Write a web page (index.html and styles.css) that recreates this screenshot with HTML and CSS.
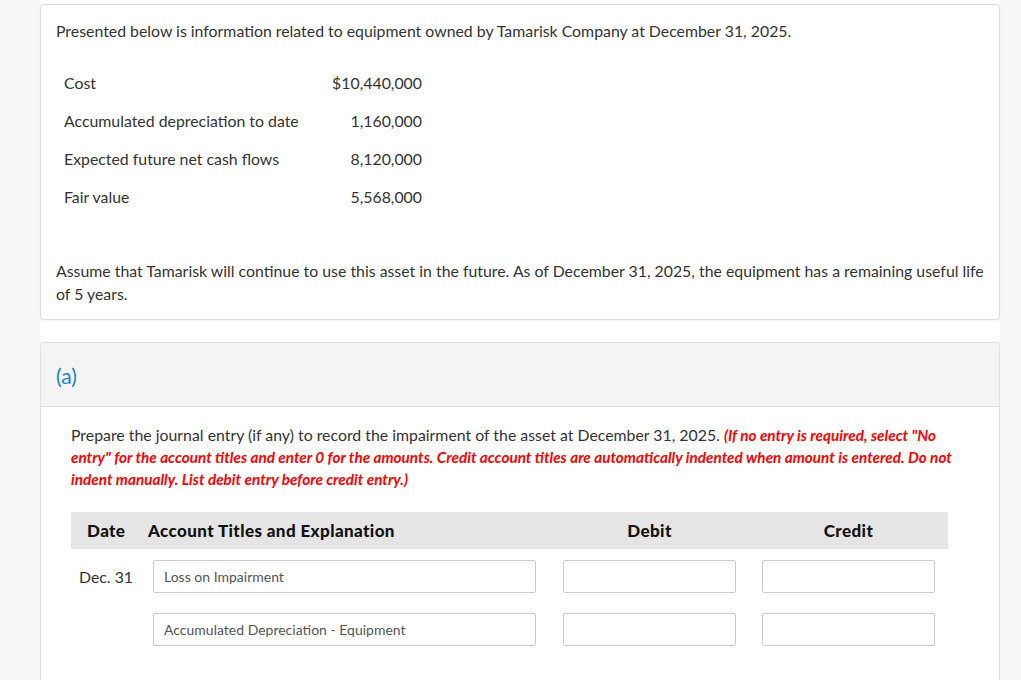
FILE: index.html
```html
<!DOCTYPE html>
<html lang="en">
<head>
<meta charset="utf-8">
<title>Impairment</title>
<link rel="stylesheet" href="styles.css">
</head>
<body>
<div class="page">
  <section class="card info">
    <p class="intro">Presented below is information related to equipment owned by Tamarisk Company at December 31, 2025.</p>
    <table class="data">
      <tr><td class="lbl">Cost</td><td class="val">$10,440,000</td></tr>
      <tr><td class="lbl">Accumulated depreciation to date</td><td class="val">1,160,000</td></tr>
      <tr><td class="lbl">Expected future net cash flows</td><td class="val">8,120,000</td></tr>
      <tr><td class="lbl">Fair value</td><td class="val">5,568,000</td></tr>
    </table>
    <p class="assume">Assume that Tamarisk will continue to use this asset in the future. As of December 31, 2025, the equipment has a remaining useful life of 5 years.</p>
  </section>

  <section class="card part">
    <div class="part-head">(a)</div>
    <div class="part-body">
      <p class="prompt">Prepare the journal entry (if any) to record the impairment of the asset at December 31, 2025. <em class="note">(If no entry is required, select "No entry" for the account titles and enter 0 for the amounts. Credit account titles are automatically indented when amount is entered. Do not indent manually. List debit entry before credit entry.)</em></p>
      <div class="journal">
        <div class="jhead">
          <div class="hdate">Date</div>
          <div class="hacct">Account Titles and Explanation</div>
          <div class="hamt">Debit</div>
          <div class="hamt">Credit</div>
        </div>
        <div class="jrow">
          <div class="cdate">Dec. 31</div>
          <div class="cacct"><div class="box">Loss on Impairment</div></div>
          <div class="camt"><div class="box"></div></div>
          <div class="camt"><div class="box"></div></div>
        </div>
        <div class="jrow">
          <div class="cdate"></div>
          <div class="cacct"><div class="box">Accumulated Depreciation - Equipment</div></div>
          <div class="camt"><div class="box"></div></div>
          <div class="camt"><div class="box"></div></div>
        </div>
      </div>
    </div>
  </section>
</div>
</body>
</html>
```

FILE: styles.css
```css
html, body {
  margin: 0;
  padding: 0;
  background: #f8f8f8;
}
body {
  font-family: Lato, "Open Sans", "Liberation Sans", sans-serif;
  color: #333;
  font-size: 15.85px;
}
.page {
  margin-left: 40px;
  width: 960px;
  background: #fff;
  min-height: 680px;
  padding-top: 4px;
  box-sizing: border-box;
}
.card {
  border: 1px solid #ddd;
  border-radius: 4px;
  background: #fff;
}
.info {
  padding: 15px 15px 14px 15px;
  box-shadow: 0 1px 1px rgba(0,0,0,0.05);
}
.intro {
  margin: 0;
  line-height: 22px;
}
.data {
  border-collapse: collapse;
  margin: 22px 0 0 8px;
}
.data td {
  height: 38px;
  padding: 0;
  line-height: 20px;
}
.data .lbl {
  width: 246px;
}
.data .val {
  width: 112px;
  text-align: right;
}
.assume {
  margin: 43px 0 0 0;
  line-height: 23px;
}
.part {
  margin-top: 22px;
  border-bottom: none;
  border-radius: 4px 4px 0 0;
}
.part-head {
  background: #f4f4f4;
  height: 64px;
  display: flex;
  align-items: center;
  padding-left: 15px;
  color: #1a86c0;
  font-size: 21px;
  border-bottom: 1px solid #ddd;
  border-radius: 4px 4px 0 0;
  padding-top: 2px;
  box-sizing: border-box;
}
.part-body {
  padding: 17px 30px 40px 30px;
}
.prompt {
  margin: 0;
  line-height: 22px;
  width: 890px;
}
.note {
  color: #f00;
  font-weight: 700;
  font-style: italic;
  font-size: 15.3px;
}
.journal {
  margin-top: 22px;
  width: 877px;
}
.jhead {
  display: grid;
  grid-template-columns: 77px 402px 199px 199px;
  background: #e5e5e5;
  height: 37px;
  align-items: center;
  font-weight: 900;
  color: #111;
  font-size: 17px;
  letter-spacing: 0.4px;
}
.hdate {
  padding-left: 16px;
}
.hamt {
  text-align: center;
}
.jrow {
  display: grid;
  grid-template-columns: 77px 402px 199px 199px;
  align-items: center;
  margin-top: 11px;
}
.jrow + .jrow {
  margin-top: 20px;
}
.cdate {
  padding-left: 8px;
}
.cacct {
  padding: 0 14px 0 5px;
}
.camt {
  padding: 0 13px;
}
.box {
  height: 33px;
  border: 1px solid #ccc;
  border-radius: 2px;
  box-sizing: border-box;
  display: flex;
  align-items: center;
  padding-left: 10px;
  font-size: 14px;
  color: #555;
  background: #fff;
}
```
